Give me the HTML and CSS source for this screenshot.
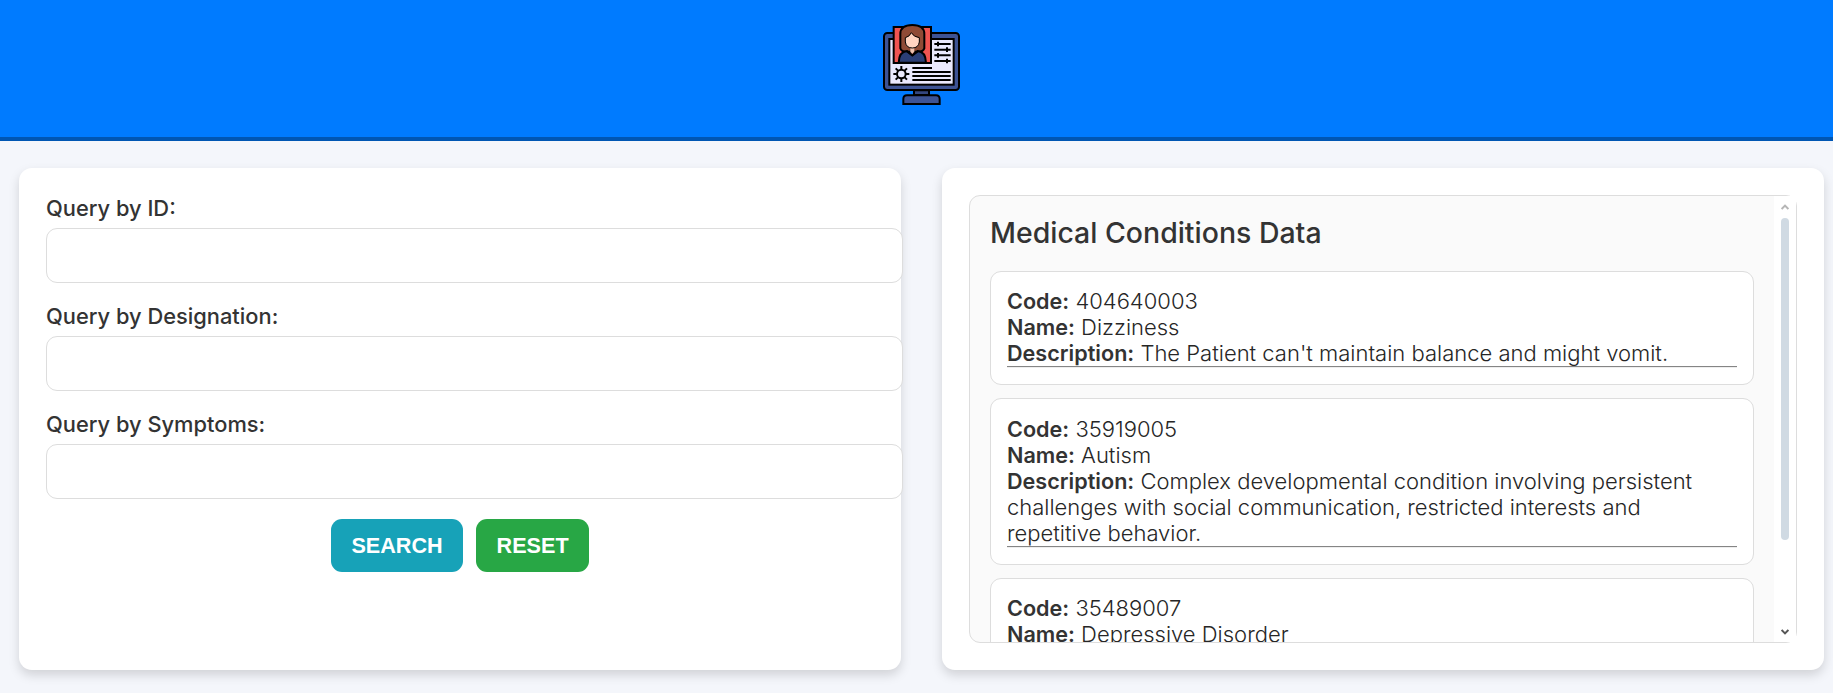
FILE: index.html
```html
<!DOCTYPE html>
<html lang="en">
<head>
<meta charset="utf-8">
<title>Medical Conditions</title>
<link rel="stylesheet" href="styles.css">
</head>
<body>
<header class="header">
  <svg class="logo" viewBox="39 42 231 243" fill="none" stroke="#000" stroke-width="6">
    <rect x="42" y="69" width="225" height="171" rx="10" fill="#3d5394"/>
    <path d="M132 241h45v14h-45z" fill="#34477f"/>
    <path d="M100 282v-15q0-11 11-11h87q11 0 11 11v15z" fill="#3d5394"/>
    <rect x="58" y="87" width="193" height="137" fill="#eae9fd"/>
    <rect x="71" y="51" width="112" height="108" fill="#f05451"/>
    <path d="M91 115V72q0-27 36-27t36 27v43q-4 10-16 10h-40q-12 0-16-10z" fill="#8f4b36"/>
    <path d="M86 158q1-33 25-35l16 12 16-12q24 2 25 35z" fill="#2b3e75"/>
    <path d="M121 113h12v12l-6 6-6-6z" fill="#efc2ad" stroke="none"/>
    <path d="M106 83q13-3 18-15 7 13 24 15v13q-3 18-21 18t-21-18z" fill="#ffd5c2" stroke-width="3"/>
    <path d="M110 124l17 13 17-13" stroke-width="5"/>
    <path d="M193 102h49M193 119h49M193 136h49M193 153h49" stroke-width="6"/>
    <path d="M204 95v14M204 129v14M231 112v14M231 146v14" stroke-width="6"/>
    <path d="M127 174h59M127 186h115M127 198h115M127 210h115" stroke-width="6.5"/>
    <circle cx="94" cy="192" r="13"/>
    <path d="M94 168v10M94 206v10M70 192h10M108 192h10M77 175l7 7M104 202l7 7M111 175l-7 7M84 202l-7 7"/>
  </svg>
</header>
<main class="main">
  <section class="card">
    <label class="label" for="q1">Query by ID:</label>
    <input class="input" id="q1" type="text">
    <label class="label" for="q2">Query by Designation:</label>
    <input class="input" id="q2" type="text">
    <label class="label" for="q3">Query by Symptoms:</label>
    <input class="input" id="q3" type="text">
    <div class="buttons">
      <button class="btn search">SEARCH</button>
      <button class="btn reset">RESET</button>
    </div>
  </section>
  <section class="card">
    <div class="results">
      <div class="list">
        <h2 class="title">Medical Conditions Data</h2>
        <div class="item"><b>Code:</b> 404640003<br><b>Name:</b> Dizziness<br><b>Description:</b> The Patient can't maintain balance and might vomit.<hr></div>
        <div class="item"><b>Code:</b> 35919005<br><b>Name:</b> Autism<br><b>Description:</b> Complex developmental condition involving persistent challenges with social communication, restricted interests and repetitive behavior.<hr></div>
        <div class="item"><b>Code:</b> 35489007<br><b>Name:</b> Depressive Disorder<hr></div>
      </div>
      <div class="scrollbar">
        <svg class="arrow" viewBox="0 0 8 6" fill="none" stroke="#b5b5b5" stroke-width="2"><path d="M.6 5L4 1.6 7.4 5"/></svg>
        <div class="thumb"></div>
        <svg class="arrow down" viewBox="0 0 8 6" fill="none" stroke="#555" stroke-width="2"><path d="M.6 1L4 4.4 7.4 1"/></svg>
      </div>
    </div>
  </section>
</main>
</body>
</html>
```
FILE: styles.css
```css
* { box-sizing: border-box; }
body {
  margin: 0;
  height: 693px;
  overflow: hidden;
  background: #f4f6fb;
  color: #333;
  font-family: Inter, sans-serif;
}
.header {
  height: 141px;
  padding: 24px 0 0 10px;
  background: #007bff;
  border-bottom: 4px solid #0056b3;
  display: flex;
  justify-content: center;
}
.logo { width: 77px; height: 81px; }
.main {
  display: grid;
  grid-template-columns: 882px 882px;
  column-gap: 41px;
  padding: 27px 0 0 19px;
}
.card {
  height: 502px;
  padding: 27px;
  background: #fff;
  border-radius: 13px;
  box-shadow: 0 5px 11px rgba(0, 0, 0, .15);
}
.label {
  display: block;
  height: 33px;
  font-size: 21.85px;
  line-height: 27px;
  font-weight: 500;
}
.input {
  display: block;
  width: 857px;
  height: 55px;
  margin-bottom: 20px;
  border: 1px solid #ddd;
  border-radius: 11px;
  background: #fff;
}
.buttons { display: flex; justify-content: center; gap: 13px; }
.btn {
  height: 53px;
  padding: 0 20.5px;
  border: 0;
  border-radius: 11px;
  color: #fff;
  font: bold 21.6px "Liberation Sans", sans-serif;
}
.search { background: #17a2b8; }
.reset { background: #28a745; }
.results {
  position: relative;
  display: flex;
  height: 448px;
  border: 1px solid #ddd;
  border-radius: 11px;
  background: #fafafa;
}
.results::before, .results::after {
  content: "";
  position: absolute;
  right: -1px;
  width: 7px;
  height: 7px;
  background: #fff;
}
.results::before { top: -1px; }
.results::after { bottom: -1px; }
.list {
  flex: 1;
  padding: 20px;
  overflow: hidden;
  border-radius: 10px 0 0 10px;
}
.title {
  margin: 0 0 21px;
  font-size: 28.45px;
  line-height: 34px;
  font-weight: 500;
}
.item {
  padding: 16.4px 16px 16px;
  margin-bottom: 12.9px;
  border: 1px solid #ddd;
  border-radius: 11px;
  background: #fff;
  color: #262626;
  font-size: 22px;
  line-height: 26px;
  font-weight: 300;
}
.item b { color: #333; font-weight: 600; font-size: 21.6px; }
.item hr {
  height: 2px;
  margin: 0;
  border: 0;
  border-top: 1px solid #858585;
  border-bottom: 1px solid #eee;
}
.scrollbar {
  width: 22px;
  padding: 8px 0 7px;
  background: #fff;
  display: flex;
  flex-direction: column;
  align-items: center;
}
.arrow { width: 8px; height: 6px; }
.down { margin-top: auto; }
.thumb {
  width: 8px;
  height: 322px;
  margin-top: 8px;
  border-radius: 4px;
  background: #d0dae3;
}
```
